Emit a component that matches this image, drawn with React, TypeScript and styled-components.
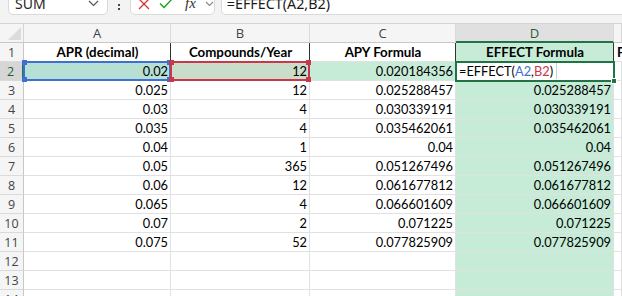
import React from "react";
import styled, { createGlobalStyle } from "styled-components";

const GlobalStyle = createGlobalStyle`
  html, body {
    margin: 0;
    padding: 0;
    background: #ffffff;
    overflow: hidden;
  }
  * {
    box-sizing: border-box;
  }
`;

const COLS = "24px 147px 139px 146px 158px 1fr";
const GREEN = "#c6ecd7";
const XL_GREEN = "#217346";

const Page = styled.div`
  width: 622px;
  height: 296px;
  overflow: hidden;
  font-family: "Lato", "Open Sans", sans-serif;
`;

const FormulaBar = styled.div`
  height: 23px;
  display: flex;
  align-items: flex-end;
  padding: 0 0 8px 8px;
  background: #f3f3f3;
  overflow: hidden;
  font-family: "Noto Sans", "Open Sans", sans-serif;
`;

const Box = styled.div<{ $width?: number }>`
  flex: ${(p) => (p.$width ? `0 0 ${p.$width}px` : "1 1 auto")};
  height: 23px;
  display: flex;
  align-items: center;
  background: #ffffff;
  border: 1px solid #dadada;
  border-radius: 0 0 5px 5px;
`;

const NameText = styled.span`
  flex: 1;
  padding-left: 6px;
  font-size: 14px;
  color: #262626;
`;

const Chevron = styled.svg`
  margin-right: 8px;
`;

const Dots = styled.div`
  flex: 0 0 22px;
  height: 24px;
  display: flex;
  flex-direction: column;
  align-items: center;
  justify-content: flex-end;
  gap: 2px;
  padding-bottom: 5px;
  span {
    width: 2px;
    height: 2px;
    background: #444;
  }
`;

const IconRow = styled.div`
  display: flex;
  align-items: center;
  gap: 9px;
  padding-left: 7px;
`;

const Fx = styled.span`
  font-family: "Liberation Serif", serif;
  font-style: italic;
  font-size: 15px;
  color: #333;
  margin-left: 3px;
`;

const FormulaInput = styled(Box)`
  margin-left: 6px;
  border-right: none;
  border-radius: 0 0 0 5px;
  padding-left: 5px;
  font-size: 14.3px;
  color: #1a1a1a;
  white-space: nowrap;
`;

const Row = styled.div<{ $header?: boolean }>`
  display: grid;
  grid-template-columns: ${COLS};
  border-top: ${(p) => (p.$header ? "1px solid #d4d4d4" : "none")};
  height: ${(p) => (p.$header ? "20px" : "19px")};
`;

const Corner = styled.div`
  background: #f5f5f5;
  border-right: 1px solid #d4d4d4;
  border-bottom: 1px solid #c8c8c8;
  display: flex;
  align-items: flex-end;
  justify-content: flex-end;
  padding: 0 2px 2px 0;
`;

const ColHead = styled.div<{ $active?: boolean }>`
  display: flex;
  align-items: center;
  justify-content: center;
  font-family: "Open Sans", "Noto Sans", sans-serif;
  font-size: 13px;
  color: ${(p) => (p.$active ? "#1c5f3a" : "#444")};
  background: ${(p) => (p.$active ? "#e0e0e0" : "#f5f5f5")};
  border-right: 1px solid #dadada;
  border-bottom: ${(p) => (p.$active ? `2px solid ${XL_GREEN}` : "1px solid #c8c8c8")};
  overflow: hidden;
`;

const RowHead = styled.div<{ $active?: boolean }>`
  display: flex;
  align-items: center;
  justify-content: center;
  padding-right: ${(p) => (p.$active ? "1px" : "0")};
  font-family: "Open Sans", "Noto Sans", sans-serif;
  font-size: 12.5px;
  color: ${(p) => (p.$active ? "#1c5f3a" : "#444")};
  background: ${(p) => (p.$active ? "#d6d6d6" : "#f5f5f5")};
  border-right: ${(p) => (p.$active ? `2px solid ${XL_GREEN}` : "1px solid #c8c8c8")};
  border-bottom: 1px solid #dadada;
`;

const Cell = styled.div<{ $fill?: string; $bold?: boolean; $left?: boolean; $edge?: string }>`
  position: relative;
  display: flex;
  align-items: flex-end;
  justify-content: ${(p) => (p.$left ? "flex-start" : p.$bold ? "center" : "flex-end")};
  padding: 0 2px 1px 3px;
  font-size: ${(p) => (p.$bold ? "13.3px" : "12.8px")};
  font-weight: ${(p) => (p.$bold ? 700 : 400)};
  color: #000;
  white-space: nowrap;
  overflow: visible;
  background: ${(p) => p.$fill || "#ffffff"};
  border-right: 1px solid ${(p) => p.$edge || "#e1e1e1"};
  border-bottom: 1px solid #e1e1e1;
`;

const RefFrame = styled.span<{ $color: string }>`
  position: absolute;
  top: -1px;
  bottom: -1px;
  left: -1px;
  right: -1px;
  border: 2px solid ${(p) => p.$color};
  pointer-events: none;
  z-index: 1;
`;

const Handle = styled.i<{ $color: string; $top?: boolean; $right?: boolean }>`
  position: absolute;
  width: 5px;
  height: 5px;
  background: ${(p) => p.$color};
  ${(p) => (p.$top ? "top: -3px;" : "bottom: -3px;")}
  ${(p) => (p.$right ? "right: -3px;" : "left: -3px;")}
`;

const EditFrame = styled.span`
  position: absolute;
  top: -1px;
  bottom: -2px;
  left: -1px;
  right: -2px;
  border: 2px solid ${XL_GREEN};
  z-index: 2;
`;

const FillHandle = styled.i`
  position: absolute;
  right: -4px;
  bottom: -4px;
  width: 6px;
  height: 6px;
  background: ${XL_GREEN};
  border: 1px solid #ffffff;
`;

const EditText = styled.span`
  display: flex;
  align-items: center;
`;

const RefA = styled.span`
  color: #3e6fd0;
`;

const RefB = styled.span`
  color: #c7394a;
`;

const Caret = styled.span`
  width: 1px;
  height: 16px;
  margin-left: 3px;
  background: #cfcfcf;
`;

type Frame = { color: string };

const Ref: React.FC<Frame> = ({ color }) => (
  <RefFrame $color={color}>
    <Handle $color={color} $top />
    <Handle $color={color} $top $right />
    <Handle $color={color} />
    <Handle $color={color} $right />
  </RefFrame>
);

const data: [string, string, string][] = [
  ["0.025", "12", "0.025288457"],
  ["0.03", "4", "0.030339191"],
  ["0.035", "4", "0.035462061"],
  ["0.04", "1", "0.04"],
  ["0.05", "365", "0.051267496"],
  ["0.06", "12", "0.061677812"],
  ["0.065", "4", "0.066601609"],
  ["0.07", "2", "0.071225"],
  ["0.075", "52", "0.077825909"],
];

const App: React.FC = () => {
  return (
    <Page>
      <GlobalStyle />
      <FormulaBar>
        <Box $width={100}>
          <NameText>SUM</NameText>
          <Chevron width="11" height="7" viewBox="0 0 11 7">
            <path d="M1 1l4.5 4.5L10 1" fill="none" stroke="#555" strokeWidth="1.2" />
          </Chevron>
        </Box>
        <Dots>
          <span />
          <span />
        </Dots>
        <Box $width={84}>
          <IconRow>
            <svg width="12" height="12" viewBox="0 0 12 12">
              <path d="M1 1l10 10M11 1L1 11" stroke="#d13438" strokeWidth="1.3" fill="none" />
            </svg>
            <svg width="14" height="11" viewBox="0 0 14 11">
              <path d="M1 5.5l4 4L13 1" stroke="#13a10e" strokeWidth="1.3" fill="none" />
            </svg>
            <Fx>fx</Fx>
            <svg width="9" height="6" viewBox="0 0 9 6">
              <path d="M1 1l3.5 3.5L8 1" fill="none" stroke="#888" strokeWidth="1.1" />
            </svg>
          </IconRow>
        </Box>
        <FormulaInput>=EFFECT(A2,B2)</FormulaInput>
      </FormulaBar>

      <Row $header>
        <Corner>
          <svg width="13" height="13" viewBox="0 0 13 13">
            <path d="M13 0V13H0Z" fill="#dcdcdc" />
          </svg>
        </Corner>
        <ColHead>A</ColHead>
        <ColHead>B</ColHead>
        <ColHead>C</ColHead>
        <ColHead $active>D</ColHead>
        <ColHead />
      </Row>

      <Row>
        <RowHead>1</RowHead>
        <Cell $bold $edge="#333">APR (decimal)</Cell>
        <Cell $bold $edge="#333">Compounds/Year</Cell>
        <Cell $bold $edge="#333">APY Formula</Cell>
        <Cell $bold $fill={GREEN} $edge="#333">EFFECT Formula</Cell>
        <Cell $bold $left>Formula</Cell>
      </Row>

      <Row>
        <RowHead $active>2</RowHead>
        <Cell $fill="#b5e0d3">
          0.02
          <Ref color="#3f6fd0" />
        </Cell>
        <Cell $fill="#c9ddca">
          12
          <Ref color="#c8374a" />
        </Cell>
        <Cell $fill={GREEN}>0.020184356</Cell>
        <Cell $left>
          <EditText>
            =EFFECT(<RefA>A2</RefA>,<RefB>B2</RefB>)<Caret />
          </EditText>
          <EditFrame>
            <FillHandle />
          </EditFrame>
        </Cell>
        <Cell />
      </Row>

      {data.map(([apr, n, apy], i) => (
        <Row key={i}>
          <RowHead>{i + 3}</RowHead>
          <Cell>{apr}</Cell>
          <Cell>{n}</Cell>
          <Cell>{apy}</Cell>
          <Cell $fill={GREEN}>{apy}</Cell>
          <Cell />
        </Row>
      ))}

      {[12, 13, 14].map((n) => (
        <Row key={n}>
          <RowHead>{n}</RowHead>
          <Cell />
          <Cell />
          <Cell />
          <Cell $fill={GREEN} />
          <Cell />
        </Row>
      ))}
    </Page>
  );
};

export default App;
